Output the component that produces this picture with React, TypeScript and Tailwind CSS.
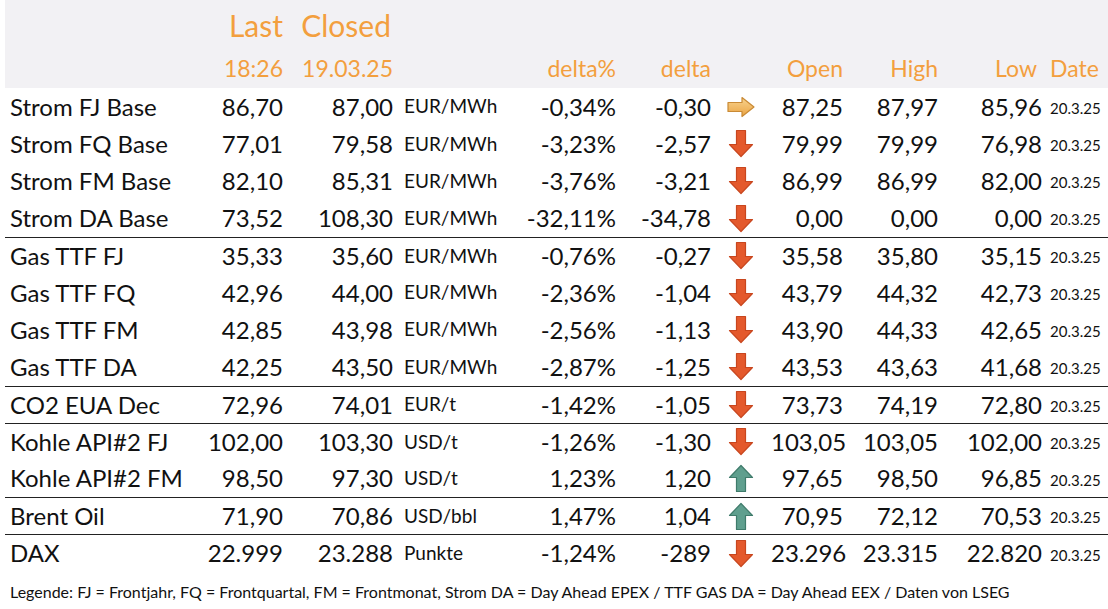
import React from "react";

type Dir = "up" | "down" | "right";

interface Row {
  name: string;
  last: string;
  closed: string;
  unit: string;
  pct: string;
  delta: string;
  dir: Dir;
  open: string;
  high: string;
  low: string;
  sep?: boolean;
}

const rows: Row[] = [
  { name: "Strom FJ Base", last: "86,70", closed: "87,00", unit: "EUR/MWh", pct: "-0,34%", delta: "-0,30", dir: "right", open: "87,25", high: "87,97", low: "85,96" },
  { name: "Strom FQ Base", last: "77,01", closed: "79,58", unit: "EUR/MWh", pct: "-3,23%", delta: "-2,57", dir: "down", open: "79,99", high: "79,99", low: "76,98" },
  { name: "Strom FM Base", last: "82,10", closed: "85,31", unit: "EUR/MWh", pct: "-3,76%", delta: "-3,21", dir: "down", open: "86,99", high: "86,99", low: "82,00" },
  { name: "Strom DA Base", last: "73,52", closed: "108,30", unit: "EUR/MWh", pct: "-32,11%", delta: "-34,78", dir: "down", open: "0,00", high: "0,00", low: "0,00" },
  { name: "Gas TTF FJ", last: "35,33", closed: "35,60", unit: "EUR/MWh", pct: "-0,76%", delta: "-0,27", dir: "down", open: "35,58", high: "35,80", low: "35,15", sep: true },
  { name: "Gas TTF FQ", last: "42,96", closed: "44,00", unit: "EUR/MWh", pct: "-2,36%", delta: "-1,04", dir: "down", open: "43,79", high: "44,32", low: "42,73" },
  { name: "Gas TTF FM", last: "42,85", closed: "43,98", unit: "EUR/MWh", pct: "-2,56%", delta: "-1,13", dir: "down", open: "43,90", high: "44,33", low: "42,65" },
  { name: "Gas TTF DA", last: "42,25", closed: "43,50", unit: "EUR/MWh", pct: "-2,87%", delta: "-1,25", dir: "down", open: "43,53", high: "43,63", low: "41,68" },
  { name: "CO2 EUA Dec", last: "72,96", closed: "74,01", unit: "EUR/t", pct: "-1,42%", delta: "-1,05", dir: "down", open: "73,73", high: "74,19", low: "72,80", sep: true },
  { name: "Kohle API#2 FJ", last: "102,00", closed: "103,30", unit: "USD/t", pct: "-1,26%", delta: "-1,30", dir: "down", open: "103,05", high: "103,05", low: "102,00", sep: true },
  { name: "Kohle API#2 FM", last: "98,50", closed: "97,30", unit: "USD/t", pct: "1,23%", delta: "1,20", dir: "up", open: "97,65", high: "98,50", low: "96,85" },
  { name: "Brent Oil", last: "71,90", closed: "70,86", unit: "USD/bbl", pct: "1,47%", delta: "1,04", dir: "up", open: "70,95", high: "72,12", low: "70,53", sep: true },
  { name: "DAX", last: "22.999", closed: "23.288", unit: "Punkte", pct: "-1,24%", delta: "-289", dir: "down", open: "23.296", high: "23.315", low: "22.820", sep: true },
];

// rows start at x=5 with 5px padding, so the name column ends at x=195
const grid =
  "grid grid-cols-[185px_88px_110px_107px_116px_95px_60px_72px_95px_104px_1fr] items-center";

function Arrow({ dir }: { dir: Dir }) {
  if (dir === "right") {
    return (
      <svg width="30" height="22" viewBox="0 0 30 22">
        <defs>
          <linearGradient id="ar" x1="0" y1="0" x2="0" y2="1">
            <stop offset="0" stopColor="#f8d38e" />
            <stop offset="1" stopColor="#eaa444" />
          </linearGradient>
        </defs>
        <path d="M2 6.5 H16 V1.5 L28 11 L16 20.5 V15.5 H2 Z" fill="url(#ar)" stroke="#c98a35" strokeWidth="1.2" strokeLinejoin="round" />
      </svg>
    );
  }
  if (dir === "up") {
    return (
      <svg width="26" height="29" viewBox="0 0 26 29">
        <path d="M13 1.5 L24.5 13.5 H17.5 V27.5 H8.5 V13.5 H1.5 Z" fill="#5f9f8e" stroke="#3f7b6b" strokeWidth="1.2" strokeLinejoin="round" />
      </svg>
    );
  }
  return (
    <svg width="26" height="29" viewBox="0 0 26 29">
      <path d="M8.5 1.5 H17.5 V15.5 H24.5 L13 27.5 L1.5 15.5 H8.5 Z" fill="#e4592c" stroke="#c8461e" strokeWidth="1.2" strokeLinejoin="round" />
    </svg>
  );
}

export default function App() {
  return (
    <div className="w-[1108px] h-[609px] bg-white text-[#111] overflow-hidden" style={{ fontFamily: "Lato, 'Open Sans', sans-serif" }}>
      <div className="ml-[5px] pl-[5px] h-[88px] bg-[#f2f1f4] text-[#f39f3e] flex flex-col">
        <div className={`${grid} h-[48px] pt-[2px] text-[30px]`}>
          <div />
          <div className="text-right">Last</div>
          <div className="text-right pr-[2px]">Closed</div>
        </div>
        <div className={`${grid} h-[40px] text-[23px]`}>
          <div />
          <div className="text-right">18:26</div>
          <div className="text-right">19.03.25</div>
          <div />
          <div className="text-right">delta%</div>
          <div className="text-right">delta</div>
          <div />
          <div className="text-right">Open</div>
          <div className="text-right">High</div>
          <div className="text-right pr-[5px]">Low</div>
          <div className="pl-[8px]">Date</div>
        </div>
      </div>
      {rows.map((r) => (
        <div
          key={r.name}
          className={`${grid} h-[37.2px] ml-[5px] pl-[5px] text-[24px] whitespace-nowrap ${r.sep ? "border-t border-[#222]" : ""}`}
        >
          <div>{r.name}</div>
          <div className="text-right">{r.last}</div>
          <div className="text-right">{r.closed}</div>
          <div className="pl-[11px] text-[19px]">{r.unit}</div>
          <div className="text-right">{r.pct}</div>
          <div className="text-right">{r.delta}</div>
          <div className="flex justify-center">
            <Arrow dir={r.dir} />
          </div>
          <div className="text-right">{r.open}</div>
          <div className="text-right">{r.high}</div>
          <div className="text-right">{r.low}</div>
          <div className="pl-[8px] text-[15px] pt-[3px]">20.3.25</div>
        </div>
      ))}
      <div className="pl-[10px] pt-[9px] text-[16px]">
        Legende: FJ = Frontjahr, FQ = Frontquartal, FM = Frontmonat, Strom DA = Day Ahead EPEX / TTF GAS DA = Day Ahead EEX / Daten von LSEG
      </div>
    </div>
  );
}
